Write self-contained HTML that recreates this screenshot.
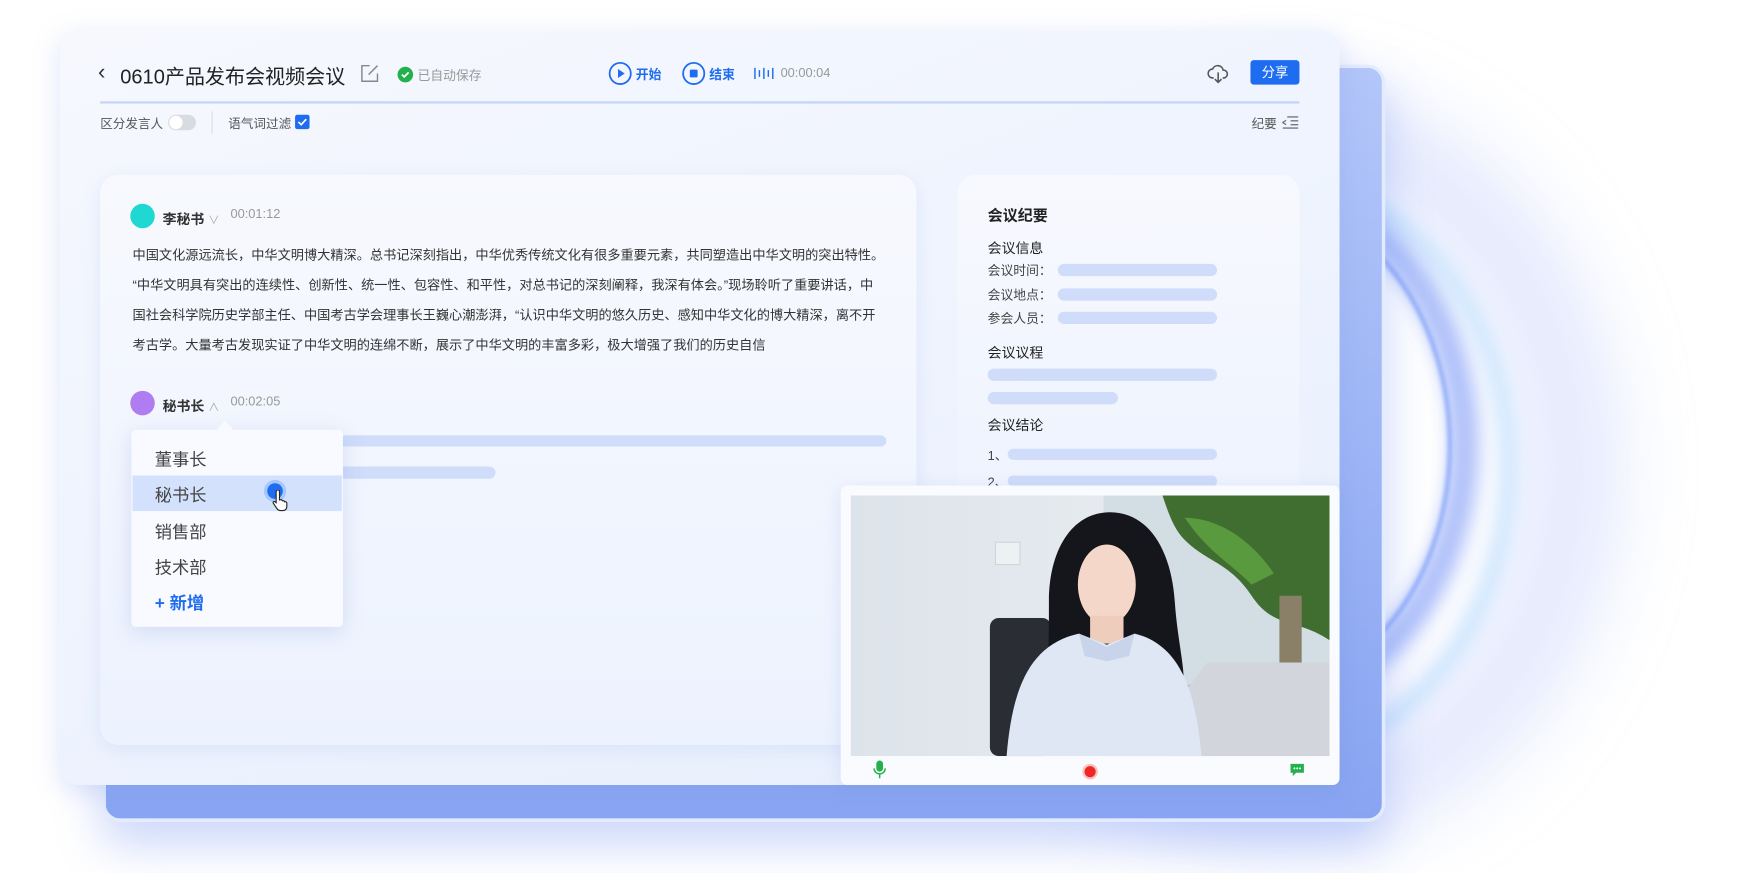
<!DOCTYPE html>
<html><head><meta charset="utf-8"><style>
*{margin:0;padding:0;box-sizing:border-box}
html,body{width:1746px;height:873px;overflow:hidden;background:#fff}
#w{position:absolute;left:0;top:0;width:1568px;height:784px;transform:scale(1.1135);transform-origin:0 0;font-family:"Liberation Sans","Noto Sans CJK SC",sans-serif;color:#222}
.a{position:absolute}
.bar{position:absolute;background:#cfdcfa;border-radius:6px}
.t{position:absolute;white-space:nowrap}
</style></head><body><div id="w">
<!-- glow ring -->
<svg class="a" style="left:900px;top:0" width="668" height="784" viewBox="900 0 668 784">
<defs>
<filter id="b1" x="-50%" y="-50%" width="200%" height="200%"><feGaussianBlur stdDeviation="35"/></filter>
<filter id="b2" x="-50%" y="-50%" width="200%" height="200%"><feGaussianBlur stdDeviation="8"/></filter>
<filter id="b3" x="-50%" y="-50%" width="200%" height="200%"><feGaussianBlur stdDeviation="2"/></filter>
</defs>
<ellipse cx="1150" cy="420" rx="260" ry="300" fill="none" stroke="#c3cffb" stroke-width="80" opacity=".5" filter="url(#b1)"/>
<ellipse cx="1130" cy="400" rx="185" ry="230" fill="none" stroke="#6f8ff5" stroke-width="26" opacity=".55" filter="url(#b2)"/>
<ellipse cx="1140" cy="420" rx="215" ry="260" fill="none" stroke="#7fc6fb" stroke-width="12" opacity=".4" filter="url(#b2)"/>
<ellipse cx="1130" cy="400" rx="172" ry="220" fill="none" stroke="#4f7cf6" stroke-width="3" opacity=".65" filter="url(#b3)"/>
</svg>
<!-- back card -->
<div class="a" style="left:92px;top:58px;width:1152px;height:680px;border-radius:16px;background:linear-gradient(180deg,#b3c6f9,#89a5f2);box-shadow:0 20px 40px rgba(110,140,240,.35);border:3px solid #e3ebfe"></div>
<!-- main card -->
<div class="a" style="left:54px;top:27px;width:1149px;height:678px;border-radius:16px;background:linear-gradient(160deg,#f6f8fe,#e7effd);box-shadow:0 6px 24px rgba(120,150,230,.25)"></div>
<!-- header -->
<div class="t" style="left:88px;top:54px;font-size:20px;color:#333">‹</div>
<div class="t" style="left:108px;top:55px;font-size:18px;color:#222">0610产品发布会视频会议</div>
<svg class="a" style="left:323px;top:57px" width="18" height="18" viewBox="0 0 18 18" fill="none" stroke="#888" stroke-width="1.3"><path d="M9 2H2v14h14V9"/><path d="M8 10l8-8"/></svg>
<div class="a" style="left:357px;top:60px;width:14px;height:14px;border-radius:50%;background:#22b14c"><svg width="14" height="14"><path d="M4 7l2 2 4-4" stroke="#fff" stroke-width="1.6" fill="none"/></svg></div>
<div class="t" style="left:375px;top:60px;font-size:11.5px;color:#999">已自动保存</div>
<svg class="a" style="left:546px;top:55px" width="22" height="22"><circle cx="11" cy="11" r="9.5" fill="none" stroke="#1e6cf0" stroke-width="1.6"/><path d="M9 7l6 4-6 4z" fill="#1e6cf0"/></svg>
<div class="t" style="left:571px;top:59px;font-size:11.5px;color:#1e6cf0;font-weight:bold">开始</div>
<svg class="a" style="left:612px;top:55px" width="22" height="22"><circle cx="11" cy="11" r="9.5" fill="none" stroke="#1e6cf0" stroke-width="1.6"/><rect x="7.5" y="7.5" width="7" height="7" rx="1" fill="#1e6cf0"/></svg>
<div class="t" style="left:637px;top:59px;font-size:11.5px;color:#1e6cf0;font-weight:bold">结束</div>
<svg class="a" style="left:677px;top:60px" width="18" height="12" stroke="#1e6cf0" stroke-width="1.3"><path d="M1 1v10M5 3v6M9 1v10M13 3v6M17 1v10"/></svg>
<div class="t" style="left:701px;top:60px;font-size:11.5px;color:#999">00:00:04</div>
<svg class="a" style="left:1084px;top:56px" width="20" height="20" fill="none" stroke="#555" stroke-width="1.4"><path d="M6 14H5a4 4 0 010-8 5 5 0 019.5 1A3.5 3.5 0 0115 14h-1"/><path d="M10 9v9M7 15l3 3 3-3"/></svg>
<div class="a" style="left:1123px;top:54px;width:44px;height:22px;background:#1e6cf0;border-radius:3px;color:#fff;font-size:12px;text-align:center;line-height:22px">分享</div>
<div class="a" style="left:90px;top:91px;width:1077px;height:1.5px;background:#c3d4f7"></div>
<div class="t" style="left:90px;top:103px;font-size:11.3px;color:#555">区分发言人</div>
<div class="a" style="left:151px;top:103px;width:25px;height:14px;border-radius:7px;background:#d8dbe2"><div class="a" style="left:1px;top:1px;width:12px;height:12px;border-radius:50%;background:#fff"></div></div>
<div class="a" style="left:190px;top:100px;width:1px;height:20px;background:#d8dde8"></div>
<div class="t" style="left:205px;top:103px;font-size:11.3px;color:#555">语气词过滤</div>
<div class="a" style="left:265px;top:103px;width:13px;height:13px;border-radius:2px;background:#1e6cf0"><svg width="13" height="13"><path d="M3 6.5l2.5 2.5 4.5-5" stroke="#fff" stroke-width="1.5" fill="none"/></svg></div>
<div class="t" style="left:1124px;top:103px;font-size:11.3px;color:#555">纪要</div>
<svg class="a" style="left:1151px;top:104px" width="15" height="12" stroke="#777" stroke-width="1.2" fill="none"><path d="M5 1h10M8 4.5h7M8 8h7M1 11h14M4 4l-3 2 3 2"/></svg>
<!-- left card -->
<div class="a" style="left:90px;top:157px;width:733px;height:512px;border-radius:16px;background:linear-gradient(180deg,#f7f9fe,#ecf2fe);box-shadow:0 4px 16px rgba(140,165,230,.18)"></div>
<div class="a" style="left:117px;top:183px;width:22px;height:22px;border-radius:50%;background:#1fd8d2"></div>
<div class="t" style="left:146px;top:186px;font-size:12.5px;font-weight:bold;color:#333">李秘书 <span style="color:#aaa;font-weight:normal;font-size:10px">∨</span></div>
<div class="t" style="left:207px;top:187px;font-size:11.5px;color:#999">00:01:12</div>
<div class="a" style="left:119px;top:216px;width:700px;font-size:11.85px;line-height:27px;color:#333">中国文化源远流长，中华文明博大精深。总书记深刻指出，中华优秀传统文化有很多重要元素，共同塑造出中华文明的突出特性。<br>“中华文明具有突出的连续性、创新性、统一性、包容性、和平性，对总书记的深刻阐释，我深有体会。”现场聆听了重要讲话，中<br>国社会科学院历史学部主任、中国考古学会理事长王巍心潮澎湃，“认识中华文明的悠久历史、感知中华文化的博大精深，离不开<br>考古学。大量考古发现实证了中华文明的连绵不断，展示了中华文明的丰富多彩，极大增强了我们的历史自信</div>
<div class="a" style="left:117px;top:351px;width:22px;height:22px;border-radius:50%;background:#b07cf2"></div>
<div class="t" style="left:146px;top:354px;font-size:12.5px;font-weight:bold;color:#333">秘书长 <span style="color:#aaa;font-weight:normal;font-size:10px">∧</span></div>
<div class="t" style="left:207px;top:355px;font-size:11.5px;color:#999">00:02:05</div>
<div class="bar" style="left:290px;top:391px;width:506px;height:10px"></div>
<div class="bar" style="left:290px;top:419px;width:155px;height:11px"></div>
<!-- dropdown -->
<div class="a" style="left:118px;top:386px;width:190px;height:177px;background:#f8faff;border-radius:4px;box-shadow:0 4px 18px rgba(120,150,220,.25)"></div>
<div class="a" style="left:197px;top:380px;width:10px;height:10px;background:#f8faff;transform:rotate(45deg)"></div>
<div class="a" style="left:119px;top:427px;width:188px;height:32px;background:#d3e1fd"></div>
<div class="t" style="left:139px;top:401px;font-size:15.5px;color:#444">董事长</div>
<div class="t" style="left:139px;top:433px;font-size:15.5px;color:#444">秘书长</div>
<div class="t" style="left:139px;top:466px;font-size:15.5px;color:#444">销售部</div>
<div class="t" style="left:139px;top:498px;font-size:15.5px;color:#444">技术部</div>
<div class="t" style="left:139px;top:530px;font-size:15.5px;color:#1e6cf0;font-weight:bold">+ 新增</div>
<div class="a" style="left:240px;top:434px;width:14px;height:14px;border-radius:50%;background:#1e6cf0;box-shadow:0 0 0 3px rgba(100,160,255,.4)"></div>
<svg class="a" style="left:243px;top:440px" width="18" height="20"><path d="M5 1.5a1.5 1.5 0 013 0V9l1-.2a1.4 1.4 0 011.6 1l.4-.1a1.4 1.4 0 011.6 1l.4-.1a1.4 1.4 0 011.6 1.2V15c0 2-1.5 3.5-3.5 3.5H8.5c-1.2 0-2-.6-2.6-1.5L2.5 12c-.6-.9.3-2 1.3-1.5L5 11.5z" fill="#fff" stroke="#222" stroke-width="1"/></svg>
<!-- right card -->
<div class="a" style="left:860px;top:157px;width:307px;height:300px;border-radius:16px;background:linear-gradient(180deg,#f7f9fe,#eef3fe)"></div>
<div class="t" style="left:887px;top:182px;font-size:13.5px;font-weight:bold;color:#222">会议纪要</div>
<div class="t" style="left:887px;top:212px;font-size:12.5px;color:#222">会议信息</div>
<div class="t" style="left:887px;top:235px;font-size:11.5px;color:#444">会议时间：</div>
<div class="t" style="left:887px;top:257px;font-size:11.5px;color:#444">会议地点：</div>
<div class="t" style="left:887px;top:278px;font-size:11.5px;color:#444">参会人员：</div>
<div class="bar" style="left:950px;top:237px;width:143px;height:11px"></div>
<div class="bar" style="left:950px;top:259px;width:143px;height:11px"></div>
<div class="bar" style="left:950px;top:280px;width:143px;height:11px"></div>
<div class="t" style="left:887px;top:306px;font-size:12.5px;color:#222">会议议程</div>
<div class="bar" style="left:887px;top:331px;width:206px;height:11px"></div>
<div class="bar" style="left:887px;top:352px;width:117px;height:11px"></div>
<div class="t" style="left:887px;top:371px;font-size:12.5px;color:#222">会议结论</div>
<div class="t" style="left:887px;top:401px;font-size:11.5px;color:#444">1、</div>
<div class="bar" style="left:905px;top:403px;width:188px;height:10px"></div>
<div class="t" style="left:887px;top:425px;font-size:11.5px;color:#444">2、</div>
<div class="bar" style="left:905px;top:427px;width:188px;height:10px"></div>
<!-- video -->
<div class="a" style="left:755px;top:436px;width:448px;height:269px;background:#f9fbff;border-radius:6px;box-shadow:0 4px 16px rgba(120,150,220,.2)"></div>
<svg class="a" style="left:764px;top:445px" width="430" height="234" viewBox="0 0 430 234">
<defs><linearGradient id="g1" x1="0" x2="1"><stop offset="0" stop-color="#dde3ea"/><stop offset="1" stop-color="#eef1f4"/></linearGradient></defs>
<rect width="430" height="234" fill="url(#g1)"/>
<rect x="227" width="203" height="234" fill="#d3dde4"/>
<rect x="130" y="42" width="22" height="20" fill="#eef1f3" stroke="#d0d5da"/>
<path d="M280 0h150v130c-30-20-50-10-70-40s-40-30-60-50C290 30 285 15 280 0z" fill="#3f6e30"/>
<path d="M300 20c30 0 60 20 80 50l-20 10c-20-20-40-30-60-60z" fill="#5a9a3e"/>
<rect x="385" y="90" width="20" height="80" fill="#8a8068"/>
<rect x="227" y="170" width="203" height="64" fill="#b8bcc2"/>
<rect x="125" y="110" width="55" height="124" rx="8" fill="#2a2d33"/>
<path d="M290 190l30-40h110v84H280z" fill="#d2d6dc"/>
<path d="M178 95c0-45 20-80 55-80s55 35 58 80c2 30 8 55 8 70H175c3-20 3-40 3-70z" fill="#15161b"/>
<ellipse cx="230" cy="80" rx="26" ry="36" fill="#f4d7c8"/>
<path d="M215 108h30v25h-30z" fill="#efcdbd"/>
<path d="M140 234c5-60 20-100 65-110l25 10 25-10c40 10 55 50 60 110z" fill="#dfe7f5"/>
<path d="M205 124l25 12 25-12-5 20-20 5-20-5z" fill="#c8d4ea"/>
</svg>
<svg class="a" style="left:784px;top:683px" width="12" height="16"><rect x="3" y="0" width="6" height="10" rx="3" fill="#22b14c"/><path d="M1 7a5 5 0 0010 0M6 12v4" stroke="#22b14c" stroke-width="1.3" fill="none"/></svg>
<div class="a" style="left:972px;top:686px;width:14px;height:14px;border-radius:50%;background:#f02626;border:2px solid #f9c0c0"></div>
<svg class="a" style="left:1158px;top:685px" width="14" height="13"><path d="M1 1h12v8H6l-3 3V9H1z" fill="#22b14c"/><circle cx="4.5" cy="5" r=".9" fill="#fff"/><circle cx="7" cy="5" r=".9" fill="#fff"/><circle cx="9.5" cy="5" r=".9" fill="#fff"/></svg>
</div></body></html>
